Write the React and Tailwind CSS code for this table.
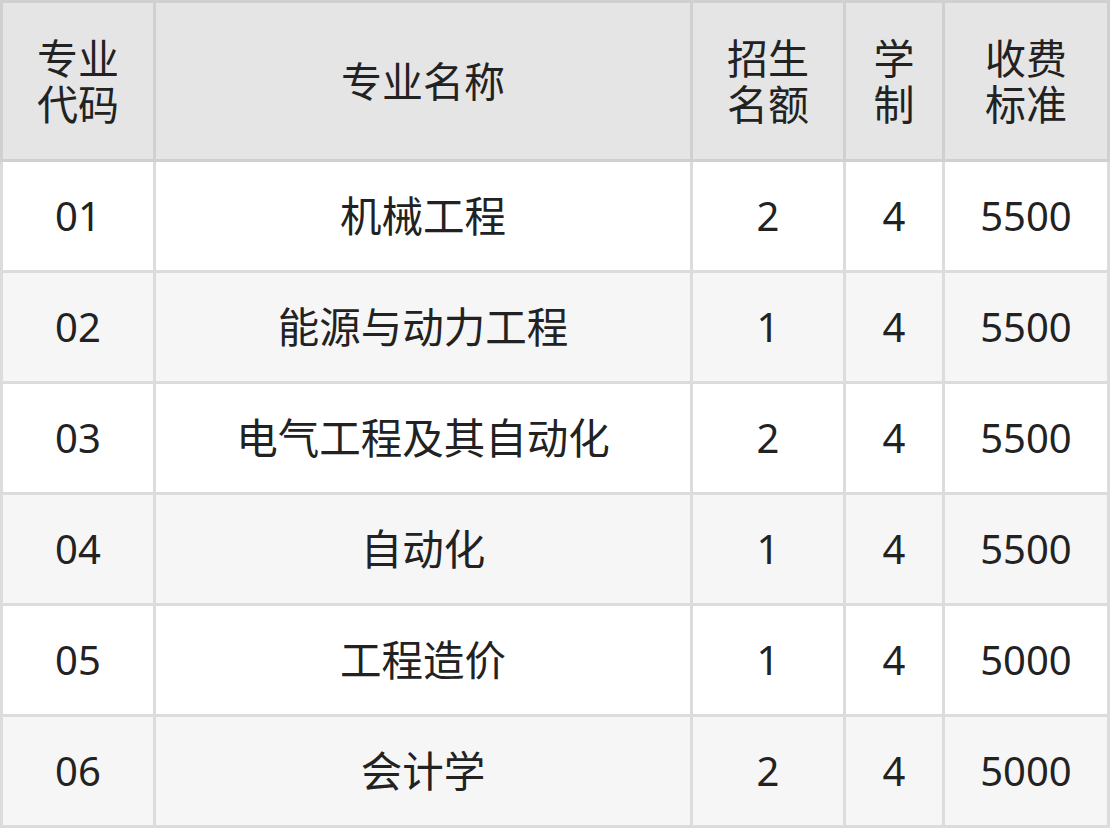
const rows = [
  ["01", "机械工程", "2", "4", "5500"],
  ["02", "能源与动力工程", "1", "4", "5500"],
  ["03", "电气工程及其自动化", "2", "4", "5500"],
  ["04", "自动化", "1", "4", "5500"],
  ["05", "工程造价", "1", "4", "5000"],
  ["06", "会计学", "2", "4", "5000"],
];

const headers = [["专业", "代码"], ["专业名称"], ["招生", "名额"], ["学", "制"], ["收费", "标准"]];

const cols = "grid grid-cols-[150px_534px_150px_96px_162px] gap-x-[3px] px-[3px]";

export default function App() {
  return (
    <div
      className="w-[1110px] h-[828px] bg-white text-[#222222] text-[40px]"
      style={{ fontFamily: '"Noto Sans", "Noto Sans CJK SC", sans-serif' }}
    >
      <div className={`${cols} bg-[#d0d0d0] py-[3px]`}>
        {headers.map((h, i) => (
          <div key={i} className="h-[156px] bg-[#e5e5e5] flex flex-col items-center justify-center text-[41px] leading-[46px]">
            {h.map((line) => (
              <span key={line}>{line}</span>
            ))}
          </div>
        ))}
      </div>
      {rows.map((r, i) => (
        <div key={r[0]} className={`${cols} bg-[#dcdcdc] pb-[3px]`}>
          {r.map((cell, j) => (
            <div
              key={j}
              className={`h-[108px] flex items-center justify-center ${j === 1 ? "text-[41.5px]" : ""} ${i % 2 === 0 ? "bg-white" : "bg-[#f6f6f6]"}`}
            >
              {cell}
            </div>
          ))}
        </div>
      ))}
    </div>
  );
}
